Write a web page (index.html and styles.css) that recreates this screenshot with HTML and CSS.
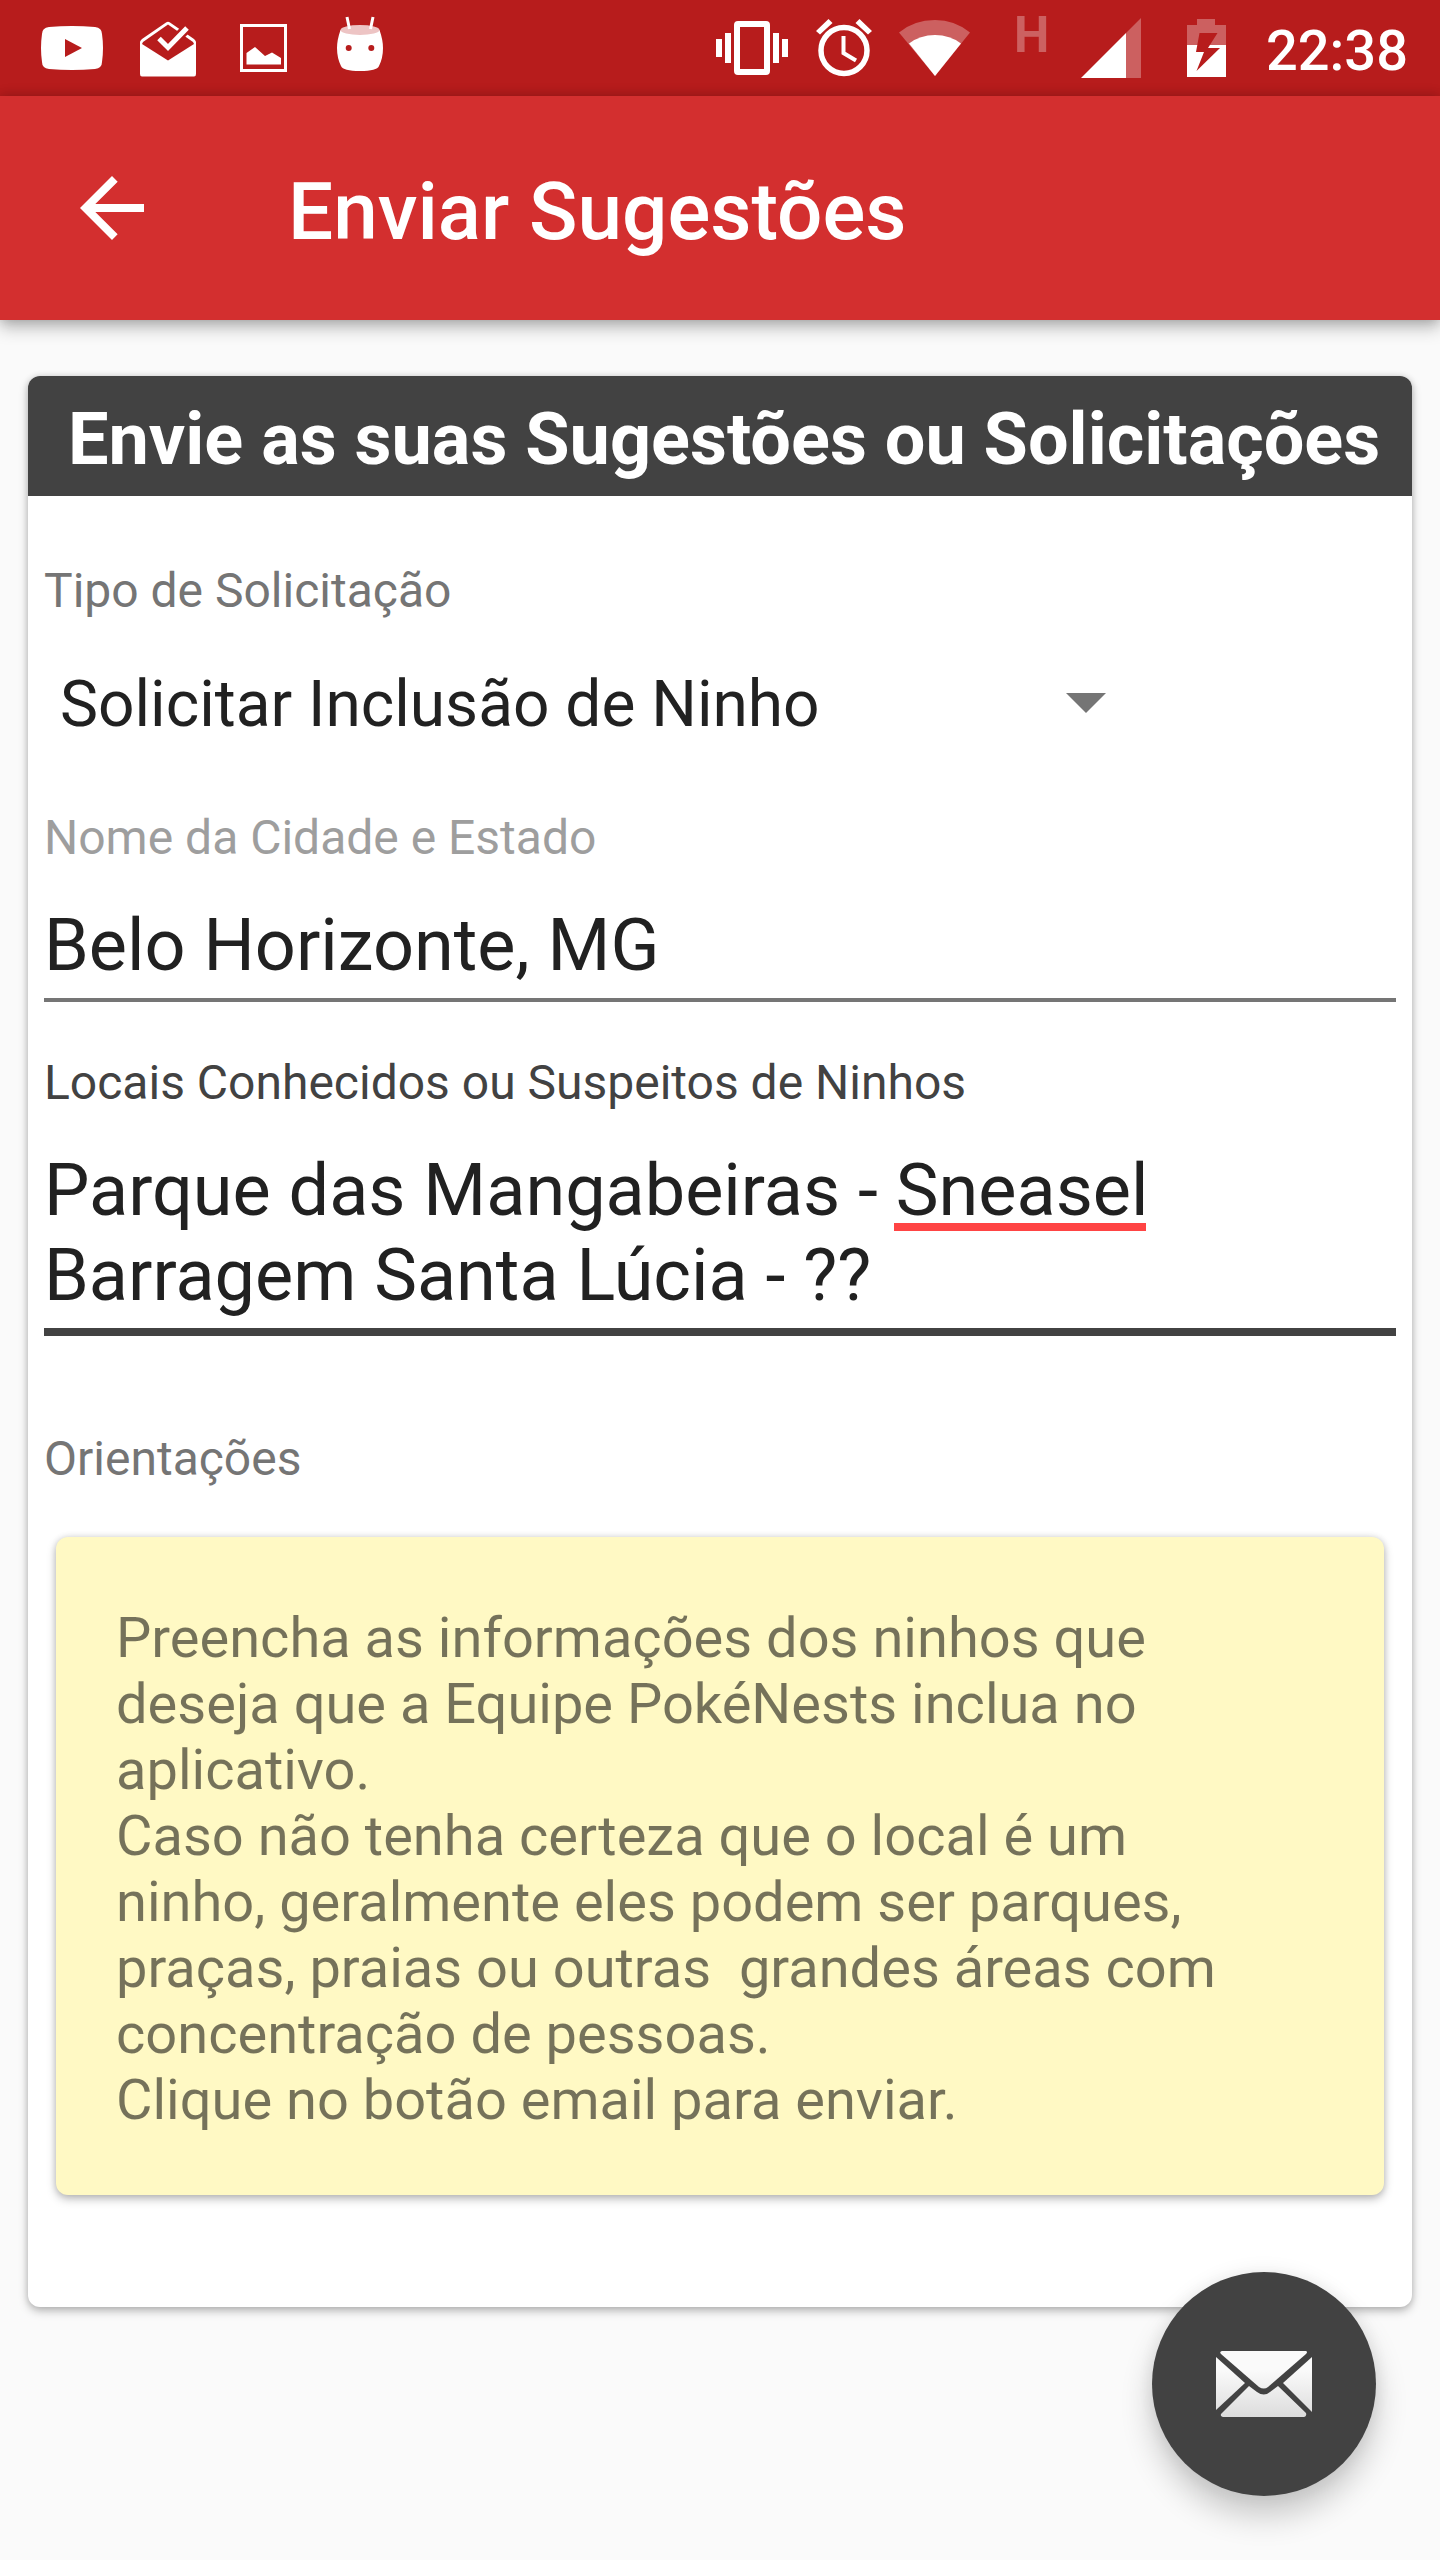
FILE: index.html
```html
<!DOCTYPE html>
<html lang="pt-BR">
  <head>
    <meta charset="utf-8" />
    <meta name="viewport" content="width=device-width, initial-scale=1" />
    <meta name="theme-color" content="#B71C1C" />
    <title>Enviar Sugestões</title>
    <link rel="stylesheet" href="styles.css">
  </head>
  <body>
    <!-- Status bar -->
    <div class="status-bar">
      <div class="status-notifications">
        <!-- YouTube -->
        <svg class="status-icon" width="96" height="96" viewBox="0 0 96 96">
          <path fill="#fff" d="M25 27Q48 25 71 27Q78 28 78 34Q80 48 78 62Q78 68 71 69Q48 71 25 69Q18 68 18 62Q16 48 18 34Q18 28 25 27Z" />
          <path fill="#b71c1c" d="M41 39L58 48L41 57Z" />
        </svg>
        <!-- Inbox -->
        <svg class="status-icon" width="96" height="96" viewBox="0 0 96 96">
          <path fill="#fff" d="M20 42Q20 41 22 39L46 22.500Q48 21 50 22.500L74 39Q76 41 76 42V74Q76 76.500 74 76.500H22Q20 76.500 20 74Z" />
          <path fill="#b71c1c" d="M22 44L23 42L48 24.500L73 42L74 44L48 60.500Z" />
          <path fill="none" stroke="#b71c1c" stroke-width="10" d="M52 43L67 28" />
          <path fill="none" stroke="#fff" stroke-width="5" d="M39 38.500L48 47.500L67 28" />
        </svg>
        <!-- Screenshot -->
        <svg class="status-icon" width="96" height="96" viewBox="0 0 96 96">
          <rect x="25.500" y="25.500" width="44" height="45" fill="none" stroke="#fff" stroke-width="3" />
          <path fill="#fff" d="M30.500 53L39 47L49 56L56 52.500L65 58V64.500H30.500Z" />
        </svg>
        <!-- Android head -->
        <svg class="status-icon" width="96" height="96" viewBox="0 0 96 96">
          <path fill="#fff" d="M28.500 30Q25 40 25 48Q25 58 29 66Q31 71 48 71Q65 71 67 66Q71 58 71 48Q71 40 67.500 30Z" />
          <ellipse cx="48" cy="30" rx="19.500" ry="5" fill="#edc4c4" />
          <path fill="none" stroke="#fff" stroke-width="3" d="M35 17L37.500 29M61 17L58.500 29" />
          <circle cx="36.700" cy="48" r="3" fill="#b71c1c" />
          <circle cx="59.300" cy="48" r="3" fill="#b71c1c" />
        </svg>
      </div>

      <div class="status-system">
        <!-- Vibrate -->
        <svg class="status-icon" width="72" height="96" viewBox="0 0 72 96" fill="#fff">
          <path d="M0 39h6v18H0zM9 33h6v30H9zM57 33h6v30h-6zM66 39h6v18h-6z" />
          <path fill-rule="evenodd" d="M22 21h28q4 0 4 4v46q0 4-4 4H22q-4 0-4-4V25q0-4 4-4zM24 27v42h24V27z" />
        </svg>
        <!-- Alarm -->
        <svg class="status-icon" width="56" height="96" viewBox="0 0 56 96" fill="#fff">
          <circle cx="28" cy="50.500" r="23" fill="none" stroke="#fff" stroke-width="5.500" />
          <path fill="none" stroke="#fff" stroke-width="4" d="M27.500 36V53L40 60.500" />
          <path d="M0 31L12.500 19L16.500 23L4 34.500ZM56 31L43.500 19L39.500 23L52 34.500Z" />
        </svg>
        <!-- Wi-Fi -->
        <svg class="status-icon" width="72" height="96" viewBox="0 0 72 96" fill="#fff">
          <path opacity=".3" d="M35 76L-1 32.500Q14 20 35 20Q55 20 70 32.500Z" />
          <path d="M35 76L9 43.500Q20 35 35 35Q50 35 61 43.500Z" />
        </svg>
        <!-- Mobile signal -->
        <svg class="status-icon" width="142" height="96" viewBox="0 0 142 96" fill="#fff">
          <text class="signal-type" x="14" y="52" opacity=".3">H</text>
          <path opacity=".3" d="M126 33L141 18V78H126Z" />
          <path d="M81 78L126 33V78Z" />
        </svg>
        <!-- Battery -->
        <svg class="status-icon" width="68" height="96" viewBox="0 0 68 96" fill="#fff">
          <path opacity=".3" d="M17 45V25H27V19H45V25H56V45Z" />
          <path d="M17 45H56V77H17Z" />
          <path fill="#b71c1c" d="M29.500 33H47.500L38 48H50L26.500 71L34 52H26Z" />
        </svg>
        <span class="clock">22:38</span>
      </div>
    </div>

    <!-- Toolbar -->
    <header class="toolbar">
      <button class="back-button" type="button" aria-label="Voltar">
        <svg width="96" height="96" viewBox="0 0 24 24">
          <path fill="#fff" d="M20 11H7.830l5.590-5.590L12 4l-8 8 8 8 1.410-1.410L7.830 13H20v-2z" />
        </svg>
      </button>
      <h1 class="toolbar-title">Enviar Sugestões</h1>
    </header>

    <main class="content">
      <form class="card" id="suggestion-form">
        <h2 class="card-header">Envie as suas Sugestões ou Solicitações</h2>

        <div class="card-body">
          <label class="label" for="request-type">Tipo de Solicitação</label>
          <div class="spinner">
            <select class="spinner-select" id="request-type">
              <option>Solicitar Inclusão de Ninho</option>
            </select>
            <svg class="spinner-arrow" width="40" height="20" viewBox="0 0 40 20">
              <path fill="#757575" d="M0 0H40L20 20Z" />
            </svg>
          </div>

          <div class="field field-city">
            <label class="label label-hint" for="city">Nome da Cidade e Estado</label>
            <input class="text-input" id="city" type="text" value="Belo Horizonte, MG" />
          </div>

          <div class="field">
            <label class="label label-active" for="places">Locais Conhecidos ou Suspeitos de Ninhos</label>
            <div class="text-area">
              <textarea class="text-input text-input-active" id="places" rows="2" spellcheck="false">Parque das Mangabeiras - Sneasel
Barragem Santa Lúcia - ??</textarea>
              <span class="misspelled"></span>
            </div>
          </div>

          <h3 class="label label-section">Orientações</h3>
          <p class="note">Preencha as informações dos ninhos que deseja que a Equipe PokéNests inclua no aplicativo.
Caso não tenha certeza que o local é um ninho, geralmente eles podem ser parques, praças, praias ou outras  grandes áreas com concentração de pessoas.
Clique no botão email para enviar.</p>
        </div>
      </form>
    </main>

    <!-- Send button -->
    <button class="fab" type="submit" form="suggestion-form" aria-label="Enviar email">
      <svg width="96" height="66" viewBox="0 0 96 66">
        <defs>
          <linearGradient id="paper" x1="0" y1="0" x2="0" y2="66" gradientUnits="userSpaceOnUse">
            <stop offset="0.300" stop-color="#fafafa" />
            <stop offset="1" stop-color="#dcdcdc" />
          </linearGradient>
        </defs>
        <g fill="url(#paper)">
          <path d="M6 0H90Q92 1 90 3L52 36Q48 39 43 36L5 3Q3 1 6 0Z" />
          <path d="M0 6L29 32L0 59Z" />
          <path d="M96 6V61L67 32Z" />
          <path d="M33 35L41 41Q48 46 54 41L62 35L90 62Q91 65 88 66H7Q4 65 5 63Z" />
        </g>
      </svg>
    </button>
  </body>
</html>
```
FILE: styles.css
```css
* {
  margin: 0;
  padding: 0;
  box-sizing: border-box;
}

body {
  min-height: 100vh;
  font-family: Roboto, 'Liberation Sans', sans-serif;
  background-color: #fafafa;
  color: #212121;
}

button,
input,
select,
textarea {
  font-family: inherit;
  color: inherit;
  border: none;
  background: none;
  outline: none;
}

/* Status bar */
.status-bar {
  display: flex;
  justify-content: space-between;
  height: 96px;
  padding: 0 32px 0 24px;
  background: #b71c1c;
  color: #fff;
}

.status-notifications,
.status-system {
  display: flex;
  align-items: center;
}

.status-system {
  gap: 28px;
}

.status-icon {
  display: block;
  flex: none;
  overflow: visible;
}

.signal-type {
  font-size: 50px;
  font-weight: 700;
}

.clock {
  font-size: 56px;
  font-weight: 500;
  line-height: 64px;
  padding-top: 6px;
}

/* Toolbar */
.toolbar {
  position: relative;
  display: flex;
  align-items: center;
  gap: 128px;
  height: 224px;
  padding: 0 64px;
  background: #d32f2f;
  color: #fff;
  box-shadow: 0 8px 16px rgba(0, 0, 0, 0.24), 0 0 12px rgba(0, 0, 0, 0.2);
}

.back-button {
  display: flex;
  cursor: pointer;
}

.toolbar-title {
  font-size: 80px;
  font-weight: 500;
  line-height: 96px;
  padding-top: 8px;
}

/* Card */
.content {
  padding: 56px 28px 0;
}

.card {
  border-radius: 12px;
  background: #fff;
  box-shadow: 0 4px 10px rgba(0, 0, 0, 0.26), 0 0 6px rgba(0, 0, 0, 0.12);
}

.card-header {
  padding: 22px 0 14px 40px;
  border-radius: 12px 12px 0 0;
  background: #424242;
  color: #fff;
  font-size: 72px;
  font-weight: 700;
  line-height: 84px;
  white-space: nowrap;
}

.card-body {
  padding: 67px 16px 112px;
}

.label {
  display: block;
  color: #757575;
  font-size: 48px;
  font-weight: 400;
  line-height: 56px;
}

.label-hint {
  color: #9e9e9e;
}

.label-active {
  color: #424242;
}

.label-section {
  margin-top: 95px;
}

.spinner {
  position: relative;
  width: 80%;
  margin-top: 48px;
}

.spinner-select {
  display: block;
  width: 100%;
  height: 76px;
  padding: 0 64px 0 16px;
  font-size: 64px;
  line-height: 76px;
  appearance: none;
}

.spinner-arrow {
  position: absolute;
  top: 26px;
  right: 20px;
  pointer-events: none;
}

.field {
  margin-top: 53px;
}

.field-city {
  margin-top: 67px;
}

.text-input {
  display: block;
  width: 100%;
  height: 99px;
  margin-top: 37px;
  padding-bottom: 11px;
  border-bottom: 4px solid #757575;
  font-size: 72px;
  line-height: 84px;
}

.text-input-active {
  height: 188px;
  padding-bottom: 10px;
  border-bottom: 8px solid #424242;
  line-height: 85px;
  resize: none;
  overflow: hidden;
}

.text-area {
  position: relative;
}

/* Spell check line under the last word of the first row */
.misspelled {
  position: absolute;
  top: 75px;
  left: 850px;
  width: 252px;
  height: 8px;
  background: #ff4444;
  pointer-events: none;
}

.note {
  margin: 50px 12px 0;
  padding: 68px 116px 62px 60px;
  border-radius: 12px;
  background: #fff9c4;
  color: rgba(0, 0, 0, 0.54);
  box-shadow: 0 4px 10px rgba(0, 0, 0, 0.26), 0 0 6px rgba(0, 0, 0, 0.12);
  font-size: 56px;
  line-height: 66px;
  white-space: pre-wrap;
}

/* Floating button */
.fab {
  position: fixed;
  right: 64px;
  bottom: 64px;
  display: flex;
  align-items: center;
  justify-content: center;
  width: 224px;
  height: 224px;
  border-radius: 50%;
  background: #424242;
  box-shadow: 0 20px 32px rgba(0, 0, 0, 0.2), 0 0 20px rgba(0, 0, 0, 0.08);
  cursor: pointer;
}
```
